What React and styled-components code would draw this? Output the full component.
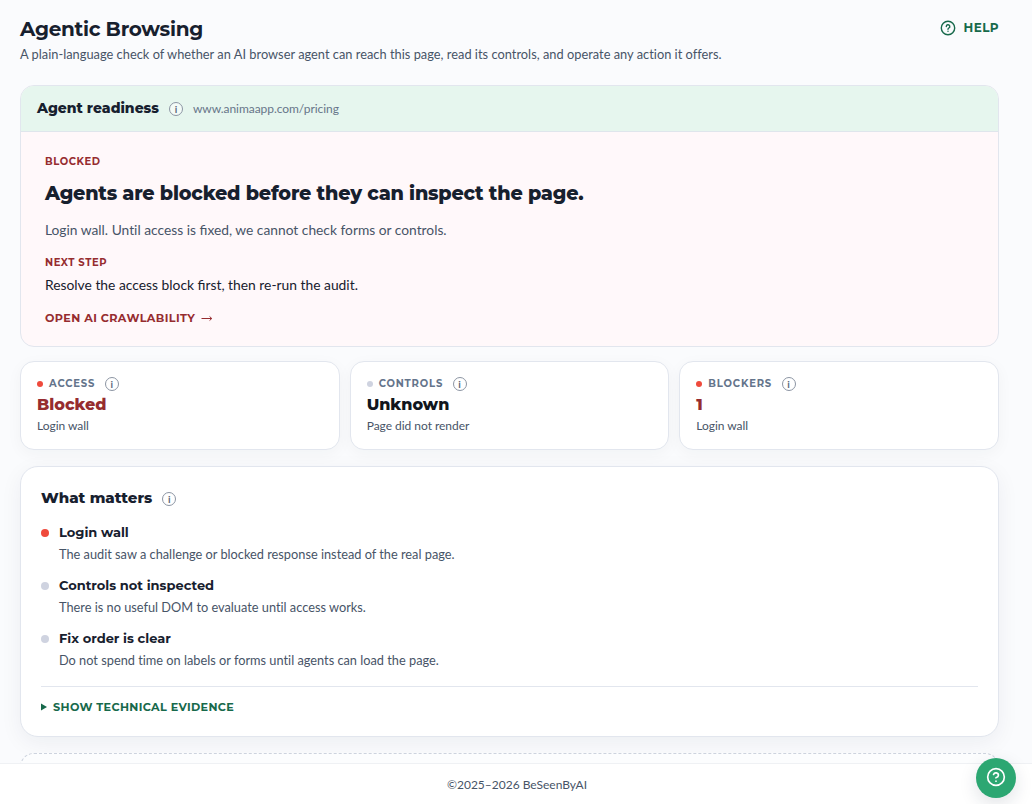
import React from 'react';
import styled, { createGlobalStyle } from 'styled-components';
import { CircleHelp } from 'lucide-react';

const stats = [
  { label: 'Access', value: 'Blocked', note: 'Login wall', bad: true },
  { label: 'Controls', value: 'Unknown', note: 'Page did not render' },
  { label: 'Blockers', value: '1', note: 'Login wall', bad: true },
];

const findings = [
  {
    title: 'Login wall',
    text: 'The audit saw a challenge or blocked response instead of the real page.',
    bad: true,
  },
  {
    title: 'Controls not inspected',
    text: 'There is no useful DOM to evaluate until access works.',
  },
  {
    title: 'Fix order is clear',
    text: 'Do not spend time on labels or forms until agents can load the page.',
  },
];

const Info = () => <InfoIcon aria-label="More info">i</InfoIcon>;

const App = () => (
  <>
    <GlobalStyle />
    <Screen>
      <Main>
        <PageHeader>
          <div>
            <PageTitle>Agentic Browsing</PageTitle>
            <PageText>
              A plain-language check of whether an AI browser agent can reach this page, read its
              controls, and operate any action it offers.
            </PageText>
          </div>
          <HelpLink href="#help">
            <HelpIcon viewBox="0 0 16 16">
              <circle cx="8" cy="8" r="6.7" />
              <path d="M6.3 6.5a1.75 1.75 0 1 1 2.6 1.5c-.6.35-.9.6-.9 1.2" />
              <path d="M8 11.1v.1" />
            </HelpIcon>
            Help
          </HelpLink>
        </PageHeader>

        <Hero>
          <HeroBar>
            <HeroTitle>Agent readiness</HeroTitle>
            <Info />
            <Url>www.animaapp.com/pricing</Url>
          </HeroBar>
          <HeroBody>
            <Eyebrow>Blocked</Eyebrow>
            <Verdict>Agents are blocked before they can inspect the page.</Verdict>
            <Reason>
              Login wall. <Plain>Until</Plain> access is fixed, we cannot check forms or controls.
            </Reason>
            <Eyebrow>Next step</Eyebrow>
            <NextStep>Resolve the access block first, then re-run the audit.</NextStep>
            <HeroLink href="#crawlability">
              Open AI Crawlability
              <Arrow viewBox="0 0 12 8">
                <path d="M0.5 4.5H10.5M8.6 2.5L10.8 4.5L8.6 6.5" />
              </Arrow>
            </HeroLink>
          </HeroBody>
        </Hero>

        <Stats>
          {stats.map(({ label, value, note, bad }) => (
            <StatCard key={label}>
              <StatLabel>
                <Dot $size={6} $bad={bad} />
                {label}
                <Info />
              </StatLabel>
              <StatValue $bad={bad}>{value}</StatValue>
              <StatNote>{note}</StatNote>
            </StatCard>
          ))}
        </Stats>

        <Matters>
          <MattersTitle>
            What matters
            <Info />
          </MattersTitle>
          <List>
            {findings.map(({ title, text, bad }) => (
              <Item key={title}>
                <Dot $size={8} $bad={bad} />
                <div>
                  <ItemTitle>{title}</ItemTitle>
                  <ItemText>{text}</ItemText>
                </div>
              </Item>
            ))}
          </List>
          <Evidence>
            <Triangle viewBox="0 0 6 8">
              <path d="M0 0.5 L6 4 L0 7.5 Z" />
            </Triangle>
            Show technical evidence
          </Evidence>
        </Matters>

        <NextPanel />
      </Main>
      <Footer>©2025–2026 BeSeenByAI</Footer>
      <HelpButton aria-label="Help">
        <CircleHelp size={20} strokeWidth={2} />
      </HelpButton>
    </Screen>
  </>
);

export default App;

const GlobalStyle = createGlobalStyle`
  * {
    box-sizing: border-box;
  }
  body {
    margin: 0;
    overflow: hidden;
    background: #fafbfd;
    color: #475467;
    font-family: Lato, sans-serif;
  }
  h1, h2, h3, p, ul {
    margin: 0;
    padding: 0;
  }
`;

const Screen = styled.div`
  position: relative;
  display: flex;
  flex-direction: column;
  height: 804px;
`;

const Main = styled.main`
  flex: 1;
  min-height: 0;
  overflow: hidden;
  padding: 16px 33px 0 20px;
`;

const PageHeader = styled.header`
  display: flex;
  justify-content: space-between;
  align-items: flex-start;
  height: 69px;
`;

const PageTitle = styled.h1`
  font: 700 20px/26px Montserrat, Inter, sans-serif;
  letter-spacing: -0.28px;
  color: #17202e;
`;

const PageText = styled.p`
  margin-top: 3px;
  font-size: 12.8px;
  line-height: 19px;
  letter-spacing: 0.02px;
  font-variant-ligatures: none;
`;

const Plain = styled.span`
  font-variant-ligatures: none;
`;

const HelpLink = styled.a`
  display: flex;
  align-items: center;
  gap: 8px;
  margin-top: 4px;
  font: 700 12px/16px Montserrat, Inter, sans-serif;
  letter-spacing: 0.4px;
  text-transform: uppercase;
  text-decoration: none;
  color: #17694b;
`;

const HelpIcon = styled.svg`
  width: 16px;
  height: 16px;
  fill: none;
  stroke: currentColor;
  stroke-width: 1.4;
  stroke-linecap: round;
`;

const Hero = styled.section`
  height: 262px;
  overflow: hidden;
  border: 1px solid #e2e6ee;
  border-radius: 14px;
  background: #fff8fa;
`;

const HeroBar = styled.div`
  display: flex;
  align-items: center;
  height: 46px;
  padding: 0 16px;
  border-bottom: 1px solid #dfe6ec;
  background: #e6f6ee;
`;

const HeroTitle = styled.h2`
  margin: 0 10px 2px 0;
  font: 800 14px/20px Montserrat, Inter, sans-serif;
  color: #17202e;
`;

const InfoIcon = styled.span`
  display: inline-flex;
  align-items: center;
  justify-content: center;
  width: 14px;
  height: 14px;
  border: 1px solid #8c95a3;
  border-radius: 50%;
  background: rgba(255, 255, 255, 0.5);
  color: #5b6778;
  font: 700 10px/12px Lato, sans-serif;
  letter-spacing: 0;
  text-transform: none;
`;

const Url = styled.span`
  margin-left: 10px;
  font-size: 12px;
  letter-spacing: -0.06px;
  color: #667589;
`;

const HeroBody = styled.div`
  padding: 23px 24px;
`;

const Eyebrow = styled.p`
  font: 700 10px/14px Montserrat, Inter, sans-serif;
  letter-spacing: 0.55px;
  text-transform: uppercase;
  color: #962c2f;
`;

const Verdict = styled.h3`
  margin-top: 11px;
  font: 800 19.2px/26px Montserrat, Inter, sans-serif;
  letter-spacing: -0.21px;
  color: #17202e;
`;

const Reason = styled.p`
  margin: 13px 0 16px;
  font-size: 13.79px;
  line-height: 21px;
`;

const NextStep = styled.p`
  margin-top: 4px;
  font-size: 13.83px;
  line-height: 21px;
  color: #17202e;
`;

const HeroLink = styled.a`
  display: flex;
  align-items: center;
  gap: 6px;
  margin-top: 15px;
  font: 700 11.2px/16px Montserrat, Inter, sans-serif;
  letter-spacing: 0.39px;
  text-transform: uppercase;
  text-decoration: none;
  color: #962c2f;
`;

const Arrow = styled.svg`
  width: 12px;
  height: 8px;
  fill: none;
  stroke: currentColor;
  stroke-width: 1;
`;

const Stats = styled.section`
  display: grid;
  grid-template-columns: repeat(3, 1fr);
  gap: 10px;
  margin-top: 14px;
`;

const StatCard = styled.article`
  height: 89px;
  padding: 15px 16px;
  border: 1px solid #e2e6ee;
  border-radius: 14px;
  background: #fff;
  box-shadow: 0 4px 16px rgba(23, 40, 60, 0.04);
`;

const StatLabel = styled.p`
  display: flex;
  align-items: center;
  height: 14px;
  font: 700 10px/14px Montserrat, Inter, sans-serif;
  letter-spacing: 0.83px;
  text-transform: uppercase;
  color: #64748b;

  ${InfoIcon} {
    margin-left: 9.5px;
  }
`;

const Dot = styled.span`
  flex: none;
  width: ${({ $size }) => $size}px;
  height: ${({ $size }) => $size}px;
  margin-right: ${({ $size }) => ($size === 6 ? 6 : 10)}px;
  border-radius: 50%;
  background: ${({ $bad }) => ($bad ? '#ef4a3c' : '#cfd3e0')};
`;

const StatValue = styled.p`
  margin-top: 3px;
  font: 800 16px/22px Montserrat, Inter, sans-serif;
  color: ${({ $bad }) => ($bad ? '#962c2f' : '#11161d')};
`;

const StatNote = styled.p`
  margin-top: 1px;
  font-size: 12px;
  line-height: 17px;
  letter-spacing: -0.03px;
`;

const Matters = styled.section`
  height: 271px;
  margin-top: 16px;
  padding: 20px;
  border: 1px solid #e2e6ee;
  border-radius: 18px;
  background: #fff;
  box-shadow: 0 6px 22px rgba(23, 40, 60, 0.06);
`;

const MattersTitle = styled.h2`
  display: flex;
  align-items: center;
  gap: 10px;
  font: 800 15px/22px Montserrat, Inter, sans-serif;
  color: #17202e;

  ${InfoIcon} {
    margin-top: 2px;
  }
`;

const List = styled.ul`
  display: grid;
  gap: 13px;
  margin-top: 14px;
  padding-bottom: 17px;
  border-bottom: 1px solid #e2e6ee;
  list-style: none;
`;

const Item = styled.li`
  display: flex;
  height: 40px;

  ${Dot} {
    margin-top: 6px;
  }
`;

const ItemTitle = styled.p`
  font: 700 13px/18px Montserrat, Inter, sans-serif;
  color: #17202e;
`;

const ItemText = styled.p`
  margin-top: 3px;
  font-size: 12.78px;
  line-height: 20px;
  font-variant-ligatures: none;
`;

const Evidence = styled.div`
  display: flex;
  align-items: center;
  margin-top: 12px;
  font: 700 11.2px/16px Montserrat, Inter, sans-serif;
  letter-spacing: 0.36px;
  text-transform: uppercase;
  color: #17694b;
`;

const Triangle = styled.svg`
  width: 6px;
  height: 8px;
  margin-right: 6px;
  fill: currentColor;
`;

const NextPanel = styled.section`
  height: 60px;
  margin-top: 16px;
  border: 1px dashed #cdd3de;
  border-radius: 14px;
  background: #fcfdfe;
`;

const Footer = styled.footer`
  height: 41px;
  border-top: 1px solid #eff1f4;
  background: #fff;
  padding: 0 15px 0 17px;
  font-size: 12px;
  line-height: 42px;
  text-align: center;
`;

const HelpButton = styled.button`
  position: absolute;
  right: 16px;
  bottom: 6px;
  display: flex;
  align-items: center;
  justify-content: center;
  width: 40px;
  height: 40px;
  padding: 0 0 2px;
  border: 0;
  border-radius: 50%;
  background: #2ca772;
  color: #fff;
  box-shadow: 0 6px 18px rgba(23, 40, 60, 0.13);
`;
